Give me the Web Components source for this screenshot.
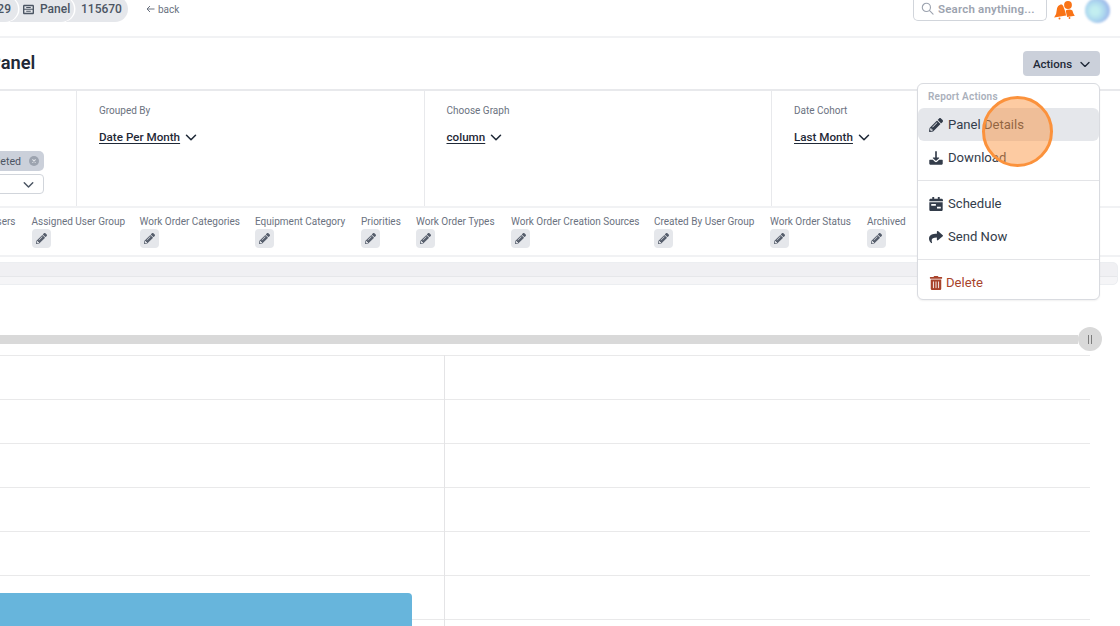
<!DOCTYPE html>
<html><head><meta charset="utf-8">
<style>
html,body{margin:0;padding:0;background:#fff;overflow:hidden;width:1120px;height:626px;font-family:Roboto,"Liberation Sans",sans-serif;color:#1f2937}
</style></head><body>
<app-page></app-page>
<template id="t-page"><style>
:host{display:block;position:relative;width:1120px;height:626px;overflow:hidden}
.shift{margin-left:-24px;width:1144px;display:flex;flex-direction:column}
</style>
<div class="shift"><top-bar></top-bar><title-row></title-row><filter-grid></filter-grid><filter-tags></filter-tags><scroll-strip></scroll-strip><range-slider></range-slider><chart-area></chart-area></div>
<action-menu></action-menu><cursor-spot></cursor-spot>
</template>
<script>
const I={
pencil:'<path d="M497.9 142.1l-46.1 46.1c-4.7 4.7-12.3 4.7-17 0l-111-111c-4.7-4.7-4.7-12.3 0-17l46.1-46.1c18.7-18.7 49.1-18.7 67.9 0l60.1 60.1c18.8 18.7 18.8 49.1 0 67.9zM284.2 99.8L21.6 362.4.4 483.9c-2.9 16.4 11.4 30.6 27.8 27.8l121.5-21.3 262.6-262.6c4.7-4.7 4.7-12.3 0-17l-111-111c-4.8-4.7-12.4-4.7-17.1 0zM124.1 339.9c-5.5-5.5-5.5-14.3 0-19.8l154-154c5.5-5.5 14.3-5.5 19.8 0s5.5 14.3 0 19.8l-154 154c-5.5 5.5-14.3 5.5-19.8 0zM88 424h48v36.3l-64.5 11.3-31.1-31.1L51.7 376H88v48z"/>',
share:'<path d="M503.691 189.836L327.687 37.851C312.281 24.546 288 35.347 288 56.015v80.053C127.371 137.907 0 170.1 0 322.326c0 61.441 39.581 122.309 83.333 154.132 13.654 9.931 33.112-2.533 28.077-18.631C66.066 312.814 132.917 274.316 288 272.085V360c0 20.7 24.3 31.453 39.687 18.164l176.004-152c11.071-9.562 11.086-26.753 0-36.328z"/>',
trash:'<path transform="translate(32 0)" d="M32 464a48 48 0 0 0 48 48h288a48 48 0 0 0 48-48V128H32zm272-256a16 16 0 0 1 32 0v224a16 16 0 0 1-32 0zm-96 0a16 16 0 0 1 32 0v224a16 16 0 0 1-32 0zm-96 0a16 16 0 0 1 32 0v224a16 16 0 0 1-32 0zM432 32H312l-9.4-18.7A24 24 0 0 0 281.1 0H166.8a23.72 23.72 0 0 0-21.4 13.3L136 32H16A16 16 0 0 0 0 48v32a16 16 0 0 0 16 16h416a16 16 0 0 0 16-16V48a16 16 0 0 0-16-16z"/>',
download:'<path d="M226 10h60v232h76c11 0 16 13 8 21L266 360c-6 6-14 6-20 0L142 263c-8-8-3-21 8-21h76z"/><path d="M10 340c0-10 9-18 20-18h112l76 72c22 20 54 20 76 0l76-72h112c11 0 20 8 20 18v130c0 18-14 32-32 32H42c-18 0-32-14-32-32z"/>',
calendar:'<path fill-rule="evenodd" d="M130 0h50c6 0 10 4 10 10v54h132V10c0-6 4-10 10-10h50c6 0 10 4 10 10v54h70c26 0 48 22 48 48v40H12v-40c0-26 22-48 48-48h60V10c0-6 4-10 10-10zM12 190h488v274c0 26-22 48-48 48H60c-26 0-48-22-48-48zm70 66v60h170v-60zm210 100v60h140v-60z"/>',
panel:'<path fill-rule="evenodd" d="M64 32h384c35 0 64 29 64 64v320c0 35-29 64-64 64H64c-35 0-64-29-64-64V96c0-35 29-64 64-64zm0 70v120h384V102zm0 170v140h384V272zM150 140h212v44H150zm0 176h212v50H150z"/>',
chev:'<path d="M5 8l5 5 5-5" fill="none" stroke="currentColor" stroke-width="1.7" stroke-linecap="round" stroke-linejoin="round"/>'
};
const icon=(n,s,c,vb='0 0 512 512')=>`<svg width="${s}" height="${s}" viewBox="${vb}" fill="${c||'currentColor'}" style="display:block;flex:none">${I[n]}</svg>`;
const chev=(s=14,c='currentColor',m='0')=>`<svg width="${s}" height="${s}" viewBox="0 0 20 20" style="display:block;flex:none;color:${c};margin:${m}">${I.chev}</svg>`;
function el(name,html){customElements.define(name,class extends HTMLElement{constructor(){super();this.attachShadow({mode:'open'}).innerHTML=typeof html==='function'?html(this):html}})}
customElements.define('app-page',class extends HTMLElement{constructor(){super();this.attachShadow({mode:'open'}).append(document.getElementById('t-page').content.cloneNode(true))}});

el('top-bar',`<style>
:host{display:flex;align-items:flex-start;height:36px;border-bottom:2px solid #f1f2f4;box-sizing:content-box;justify-content:space-between}
.l{display:flex;align-items:center;height:26px;margin:-4px 0 0 -20px}
.p{height:26px;background:#e5e7eb;display:flex;align-items:center;font-size:12px;font-weight:500;color:#4b5563;border-radius:0 13px 13px 0;box-shadow:1.5px 0 0 #fff;position:relative;box-sizing:border-box}
.a{width:62px;padding-right:7px;z-index:3;justify-content:flex-end}
.b{width:64px;margin-left:-8px;padding-left:13px;z-index:2;gap:6px}
.c{width:62px;margin-left:-8px;padding-left:15px;z-index:1}
.back{margin-left:18px;display:flex;align-items:center;gap:3px;font-size:10px;color:#6b7280}
.r{display:flex;align-items:flex-start}
.s{width:134px;height:21px;border:1px solid #d1d5db;border-top:none;border-radius:0 0 5px 5px;box-sizing:border-box;display:flex;align-items:center;gap:4px;padding:0 0 3px 7px;font-size:11.5px;font-weight:600;color:#9ca3af;letter-spacing:.2px}
.logo{margin:0 0 0 6px;display:block}
.av{width:25px;height:25px;border-radius:50%;margin:-2px 10px 0 10px;background:radial-gradient(circle at 40% 52%,#c2eef0 0 18%,#aed9ef 45%,#9db8ea 72%,#b9cdf2 100%);filter:blur(1.2px)}
</style>
<div class="l"><span class="p a">29</span><span class="p b">${icon('panel',11,'#4b5563')}Panel</span><span class="p c">115670</span>
<span class="back"><svg width="9" height="10" viewBox="0 0 9 10" fill="none" stroke="#6b7280" stroke-width="1"><path d="M8.5 5H1M4 2L1 5l3 3"/></svg>back</span></div>
<div class="r"><div class="s"><svg width="13" height="13" viewBox="0 0 14 14" fill="none" stroke="#9ca3af" stroke-width="1.2" style="flex:none"><circle cx="5.8" cy="5.8" r="4.4"/><path d="M9 9l4 4" stroke-linecap="round"/></svg>Search anything...</div>
<svg class="logo" width="22" height="20" viewBox="0 0 22 20" fill="#f97316"><circle cx="15" cy="5" r="3.9"/><path d="M7.6 4.6c1.2-.5 2.2.3 2.6 1.4l2 5.6 .9 3.8-12 2.2 2-3.6.9-5.4c.4-1.8 1.6-3.3 3.6-4z"/><path d="M12.8 10.5c2-1.2 5-1.2 6.6 0l1.1 3.3 1.3 1.9-7.7 1.4-.8-3.5z"/><circle cx="6.5" cy="18.4" r="1"/><circle cx="16.5" cy="18" r=".9"/></svg>
<div class="av"></div></div>`);

el('title-row',`<style>
:host{display:flex;justify-content:space-between;align-items:center;height:51px;padding:0 20px 0 13px;box-sizing:border-box}
h1{margin:0 0 3px;font-size:18.3px;font-weight:600;color:#1f2937}
.btn{height:25px;width:77px;border-radius:4px;background:#cbd0da;display:flex;align-items:center;justify-content:center;gap:5px;font-size:11.5px;font-weight:500;color:#1f2937;padding-left:3px;box-sizing:border-box}
</style><h1>Panel</h1><div class="btn">Actions${chev(16)}</div>`);

el('filter-cell',h=>`<style>
:host{display:block;border-left:1px solid #e8e9ec;padding:13px 0 0 22px;box-sizing:border-box;min-width:0}
.t{font-size:10px;color:#6b7280;line-height:13px}
.v{margin-top:12px;height:16px;display:flex;align-items:center;gap:2px;font-size:11.65px;font-weight:500;color:#1f2937;line-height:16px}
u{text-underline-offset:2px}
</style><div class="t">${h.getAttribute('label')}</div><div class="v"><u>${h.getAttribute('value')}</u>${chev(18,'currentColor','-2px 0 -1px 0')}</div>`);

el('status-filter',`<style>
:host{display:flex;flex-direction:column;align-items:flex-end;padding:60px 32px 0 0;box-sizing:border-box;overflow:hidden}
.chip{height:20px;width:120px;flex:none;background:#cbd0da;border-radius:5px;display:flex;align-items:center;justify-content:flex-end;gap:8px;padding-right:5px;box-sizing:border-box;font-size:10.6px;color:#4b5563}
.x{width:10px;height:10px;border-radius:50%;background:#9ca3af;display:block}
.x svg{display:block}
.sel{margin-top:3px;height:20px;width:120px;flex:none;box-sizing:border-box;border:1px solid #d1d5db;border-radius:4px;display:flex;align-items:center;justify-content:flex-end;padding-right:6px;color:#4b5563}
</style><div class="chip">Completed<span class="x"><svg width="10" height="10" viewBox="0 0 10 10" stroke="#dfe2e7" stroke-width="1.1"><path d="M3.4 3.4l3.2 3.2M6.6 3.4L3.4 6.6"/></svg></span></div><div class="sel">${chev(17)}</div>`);

el('filter-grid',`<style>
:host{display:grid;grid-template-columns:100px 347.5px 347.5px 1fr;height:119px;border-top:2px solid #e8e9ec;border-bottom:2px solid #f1f2f4;box-sizing:border-box}
</style><status-filter></status-filter><filter-cell label="Grouped By" value="Date Per Month"></filter-cell><filter-cell label="Choose Graph" value="column"></filter-cell><filter-cell label="Date Cohort" value="Last Month"></filter-cell>`);

const tags=['Users','Assigned User Group','Work Order Categories','Equipment Category','Priorities','Work Order Types','Work Order Creation Sources','Created By User Group','Work Order Status','Archived'];
const widths=[55.5,108,115.5,106,55,95,143,116,97,100];
el('filter-tags',`<style>
:host{display:grid;grid-template-columns:${widths.map(w=>w+'px').join(' ')};height:49px;border-bottom:2px solid #f1f2f4;box-sizing:border-box;padding-top:7px;overflow:hidden}
.t{font-size:10px;line-height:13px;color:#6b7280;white-space:nowrap}
.e{margin-top:1px;width:19px;height:19px;border-radius:4px;background:#e5e7eb;display:flex;align-items:center;justify-content:center}
.i:first-of-type{text-align:right;padding-right:16px}
.i:first-of-type .e{display:none}
</style>${tags.map(t=>`<div class="i"><div class="t">${t}</div><div class="e">${icon('pencil',11,'#565e6c')}</div></div>`).join('')}`);

el('scroll-strip',`<style>
:host{display:block;height:23px;margin:5px 0 0 0;width:1142px;box-sizing:border-box;background:linear-gradient(#f0f0f3 0 13px,#e6e7ea 13px 14px,#f5f5f7 14px);border:1px solid #eceef1;border-radius:0 5px 5px 0}
</style>`);

el('range-slider',`<style>
:host{display:flex;align-items:center;height:26px;margin-top:41px}
.bar{height:9px;width:1102px;background:#d9d9d9}
.h{width:24px;height:24px;border-radius:50%;background:#d9d9d9;display:flex;align-items:center;justify-content:center;gap:2px}
.h i{width:1px;height:9px;background:#7c7c7c;display:block}
</style><div class="bar"></div><div class="h"><i></i><i></i></div>`);

el('chart-area',`<style>
:host{display:block;position:relative;height:271px;width:1114px;margin-top:3px;overflow:hidden;
background-image:repeating-linear-gradient(to bottom,#e9e9ea 0 1px,transparent 1px 44px)}
.v{position:absolute;left:468px;top:0;bottom:0;width:1px;background:#e4e4e6}
.bar{position:absolute;left:0;top:238px;width:436px;bottom:0;background:#67b5dc;border-radius:0 4px 0 0}
</style><div class="v"></div><div class="bar"></div>`);

el('menu-item',h=>`<style>
:host{display:flex;flex:none;align-items:center;height:33px;padding-left:11px;gap:6px;font-size:13.1px;color:${h.getAttribute('color')||'#333c4a'};background:${h.hasAttribute('active')?'#e5e7eb':'transparent'};border-radius:6px}
.ic{width:13px;display:flex;justify-content:center}
span{margin-left:${h.hasAttribute('tight')?'-2px':'0'}}
</style><div class="ic">${icon(h.getAttribute('icon'),14,'currentColor')}</div><span>${h.textContent}</span>`);

el('action-menu',`<style>
:host{position:absolute;left:917px;top:83px;width:183px;height:217px;box-sizing:border-box;background:#fff;border:1px solid #d9dbe0;border-radius:6px;box-shadow:0 1px 2px rgba(0,0,0,.06);display:flex;flex-direction:column}
.h{height:24px;flex:none;line-height:25px;padding:0 10px;font-size:10px;font-weight:600;color:#aab0bb;letter-spacing:.2px}
.sep{height:1px;flex:none;background:#e3e4e7;margin-top:6px}
.g1{padding-top:6px;display:flex;flex-direction:column;flex:none}
</style><div class="h">Report Actions</div>
<menu-item icon="pencil" active>Panel Details</menu-item><menu-item icon="download">Download</menu-item><div class="sep"></div>
<div class="g1"><menu-item icon="calendar">Schedule</menu-item><menu-item icon="share">Send Now</menu-item></div><div class="sep"></div>
<div class="g1"><menu-item icon="trash" color="#a8432b" tight>Delete</menu-item></div>`);

el('cursor-spot',`<style>
:host{position:absolute;left:982px;top:96px;width:71px;height:71px;box-sizing:border-box;border-radius:50%;border:3px solid #fb923c;background:rgba(251,146,60,.48)}
</style>`);
</script>
</body></html>
